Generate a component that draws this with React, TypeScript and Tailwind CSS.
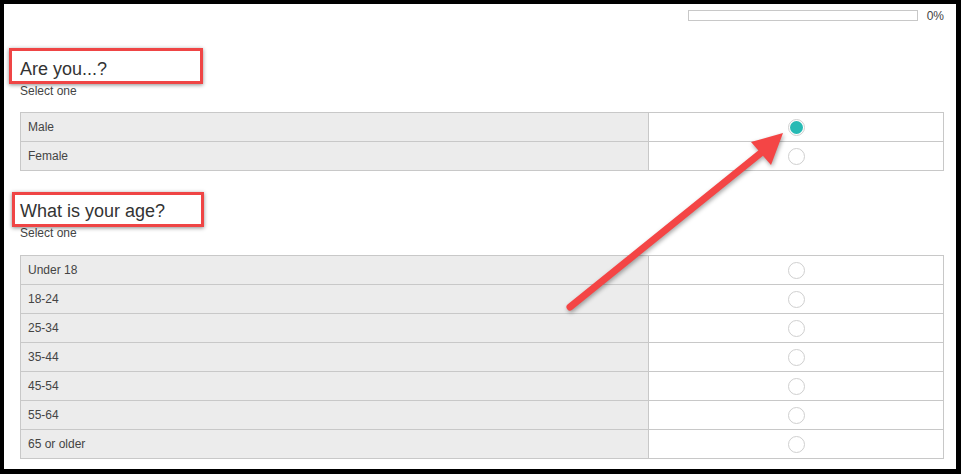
import React from "react";

const ff = { fontFamily: '"Liberation Sans", Arial, sans-serif' };

function Radio({ checked }: { checked?: boolean }) {
  return (
    <div className="w-[17px] h-[17px] rounded-full border border-[#cfcfcf] bg-white p-[1px] box-border">
      {checked && <div className="w-full h-full rounded-full bg-[#27bab4]" />}
    </div>
  );
}

function Table({ rows, checked }: { rows: string[]; checked?: number }) {
  return (
    <div className="w-[924px] border border-[#c8c8c8] flex flex-col">
      {rows.map((r, i) => (
        <div key={r} className={i > 0 ? "flex h-[29px] border-t border-[#c8c8c8]" : "flex h-[28px]"}>
          <div className="w-[628px] bg-[#ececec] border-r border-[#c8c8c8] flex items-center pl-[7px] text-[12px] text-[#444]">
            {r}
          </div>
          <div className="flex-1 flex items-center justify-center bg-white">
            <Radio checked={checked === i} />
          </div>
        </div>
      ))}
    </div>
  );
}

function Heading({ text, box }: { text: string; box: string }) {
  return (
    <div className="relative text-[18px] leading-[20px] text-[#333]">
      {text}
      <div className={"absolute border-[3px] border-[#ef4545] shadow-[0_1px_4px_rgba(0,0,0,0.45)] " + box} />
    </div>
  );
}

export default function App() {
  return (
    <div
      style={ff}
      className="w-[961px] h-[474px] box-border border-t-4 border-l-4 border-r-[5px] border-b-[5px] border-black bg-white relative overflow-hidden"
    >
      <div className="flex flex-col pl-[16px] pr-[12px] pt-[6px]">
        <div className="flex items-center justify-end h-[11px]">
          <div className="w-[230px] h-[11px] border border-[#c8c8c8] bg-white" />
          <div className="ml-[9px] text-[12px] leading-[12px] text-[#444]">0%</div>
        </div>

        <div className="mt-[38px]">
          <Heading text="Are you...?" box="left-[-11px] top-[-11px] w-[194px] h-[36px]" />
          <div className="mt-[5px] text-[12px] leading-[14px] text-[#444]">Select one</div>
          <div className="mt-[14px]">
            <Table rows={["Male", "Female"]} checked={0} />
          </div>
        </div>

        <div className="mt-[30px]">
          <Heading text="What is your age?" box="left-[-8px] top-[-9px] w-[192px] h-[35px]" />
          <div className="mt-[5px] text-[12px] leading-[14px] text-[#444]">Select one</div>
          <div className="mt-[15px]">
            <Table rows={["Under 18", "18-24", "25-34", "35-44", "45-54", "55-64", "65 or older"]} />
          </div>
        </div>
      </div>

      <svg
        className="absolute left-[-4px] top-[-4px] pointer-events-none"
        width="961"
        height="474"
        style={{ filter: "drop-shadow(1px 2px 2px rgba(0,0,0,0.35))" }}
      >
        <line x1="570" y1="307" x2="762" y2="152" stroke="#f44545" strokeWidth="7" strokeLinecap="round" />
        <polygon points="783,133 751,142 771,165" fill="#f44545" />
      </svg>
    </div>
  );
}
